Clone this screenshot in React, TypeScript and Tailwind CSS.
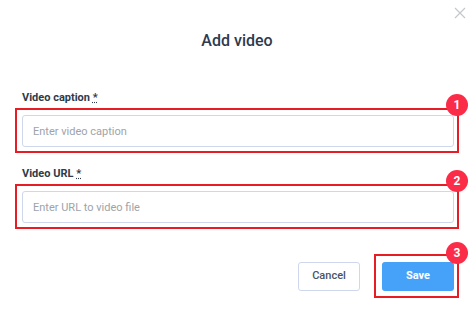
import React from "react";

type Field = {
  label: string;
  placeholder: string;
  badge: number;
};

const FIELDS: Field[] = [
  { label: "Video caption", placeholder: "Enter video caption", badge: 1 },
  { label: "Video URL", placeholder: "Enter URL to video file", badge: 2 },
];

function Badge({ n, className }: { n: number; className: string }) {
  return (
    <span
      className={`absolute flex h-[22px] w-[22px] items-center justify-center rounded-full bg-[#fb2c47] text-[12px] font-bold leading-none text-white ${className}`}
    >
      {n}
    </span>
  );
}

export default function App() {
  return (
    <div
      className="relative h-[318px] w-[474px] bg-white px-[15px]"
      style={{ fontFamily: "Roboto, 'Liberation Sans', sans-serif" }}
    >
      {/* Close */}
      <button
        aria-label="Close"
        className="absolute right-[8px] top-[7px] flex h-[12px] w-[12px] items-center justify-center"
      >
        <svg width="12" height="12" viewBox="0 0 12 12">
          <path
            d="M1 1 L11 11 M11 1 L1 11"
            stroke="#c4c7cc"
            strokeWidth="1.2"
            fill="none"
          />
        </svg>
      </button>

      {/* Header */}
      <h2 className="pt-[30px] text-center text-[16px] font-medium leading-[22px] text-[#2e3a4e]">
        Add video
      </h2>

      {/* Fields */}
      <div className="mt-[38px] flex flex-col gap-[13px]">
        {FIELDS.map((f) => (
          <div key={f.badge} className="flex flex-col">
            <label className="mb-[2px] pl-[7px] text-[11px] font-bold leading-[16px] text-[#2f3a4a]">
              {f.label}{" "}
              <abbr className="underline decoration-dotted" title="required">
                *
              </abbr>
            </label>
            <div className="relative border-2 border-[#e61d25] pb-[4px] pl-[5px] pr-[3px] pt-[5px]">
              <input
                placeholder={f.placeholder}
                className="h-[32px] w-full rounded-[3px] border border-[#cfd7ec] px-[10px] text-[11px] text-[#333] outline-none placeholder:text-[#9ea3aa]"
              />
              <Badge n={f.badge} className="-right-[11px] -top-[16px]" />
            </div>
          </div>
        ))}
      </div>

      {/* Actions */}
      <div className="mt-[25px] flex items-start justify-end gap-[14px]">
        <button className="mt-[8px] h-[29px] w-[62px] rounded-[3px] border border-[#cfd7ec] bg-white text-[11px] font-medium text-[#4a5464]">
          Cancel
        </button>
        <div className="relative border-2 border-[#e61d25] pb-[5px] pl-[6px] pr-[3px] pt-[6px]">
          <button className="h-[29px] w-[72px] rounded-[3px] bg-[#45a2f8] text-[11px] font-bold text-white">
            Save
          </button>
          <Badge n={3} className="-right-[11px] -top-[14px]" />
        </div>
      </div>
    </div>
  );
}
